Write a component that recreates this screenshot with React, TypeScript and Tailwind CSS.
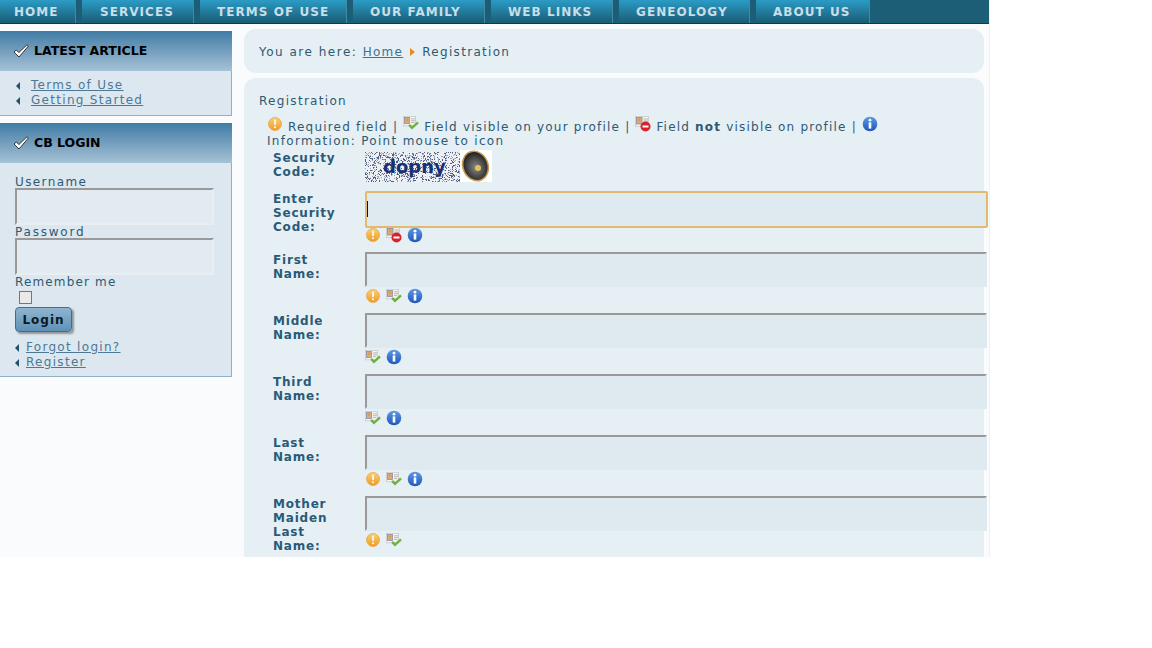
import React from 'react';

const font = "font-['DejaVu_Sans',Verdana,sans-serif]";

const navItems = [
  { label: 'HOME', width: 'w-[76px]', pad: 'pl-[14px]' },
  { label: 'SERVICES', width: 'w-[112px]', pad: 'pl-[18px]' },
  { label: 'TERMS OF USE', width: 'w-[147px]', pad: 'pl-[17px]' },
  { label: 'OUR FAMILY', width: 'w-[132px]', pad: 'pl-[17px]' },
  { label: 'WEB LINKS', width: 'w-[122px]', pad: 'pl-[17px]' },
  { label: 'GENEOLOGY', width: 'w-[131px]', pad: 'pl-[17px]' },
  { label: 'ABOUT US', width: 'w-[114px]', pad: 'pl-[17px]' },
];

const RequiredIcon = () => (
  <svg width="16" height="16" viewBox="0 0 16 16" className="shrink-0">
    <defs>
      <linearGradient id="req" x1="0" y1="0" x2="0" y2="1">
        <stop offset="0" stopColor="#f9d07a" />
        <stop offset="1" stopColor="#f09a20" />
      </linearGradient>
    </defs>
    <circle cx="8" cy="8" r="6.5" fill="url(#req)" stroke="#e8a646" strokeWidth="0.8" />
    <rect x="7.2" y="3.6" width="1.7" height="5.6" rx="0.8" fill="#fff" />
    <circle cx="8" cy="11.2" r="1" fill="#fff" />
  </svg>
);

const Card = () => (
  <g>
    <rect x="0.5" y="0.5" width="13" height="10" fill="#f4f3f0" stroke="#c4c4c4" strokeWidth="0.7" />
    <rect x="1.5" y="1.5" width="5.5" height="6.5" fill="#d3ad84" stroke="#8f86a8" strokeWidth="0.8" />
    <circle cx="4.2" cy="4" r="1.4" fill="#e7983a" />
    <path d="M8.5 3h4.5M8.5 5h4.5M8.5 7h3.5" stroke="#a5a5a5" strokeWidth="0.8" />
  </g>
);

const VisibleIcon = () => (
  <svg width="16" height="15" viewBox="0 0 17 16" className="shrink-0">
    <Card />
    <path d="M6.5 9.5l3 3.2L16 6.8" fill="none" stroke="#6fb143" strokeWidth="2.6" />
  </svg>
);

const HiddenIcon = () => (
  <svg width="16" height="16" viewBox="0 0 16 16" className="shrink-0">
    <Card />
    <circle cx="10.5" cy="10.5" r="5" fill="#d8212b" />
    <rect x="7.5" y="9.5" width="6" height="2" fill="#fff" />
  </svg>
);

const InfoIcon = () => (
  <svg width="16" height="16" viewBox="0 0 16 16" className="shrink-0">
    <defs>
      <linearGradient id="inf" x1="0" y1="0" x2="0" y2="1">
        <stop offset="0" stopColor="#5f9ae6" />
        <stop offset="1" stopColor="#1f56b8" />
      </linearGradient>
    </defs>
    <circle cx="8" cy="8" r="7.3" fill="url(#inf)" />
    <circle cx="8" cy="4.2" r="1.4" fill="#fff" />
    <rect x="6.7" y="6.4" width="2.6" height="6.2" fill="#fff" />
  </svg>
);

const CheckMark = () => (
  <svg width="16" height="14" viewBox="0 0 16 14" className="shrink-0">
    <path d="M1 8 L3.4 6 L5.8 8.6 L14 0.8 L15.4 2 L6 13 Z" fill="#fff" stroke="#222" strokeWidth="0.9" strokeLinejoin="round" />
  </svg>
);

const Bullet = () => (
  <span className="w-0 h-0 border-y-[4px] border-y-transparent border-r-[4px] border-r-[#24506a] shrink-0" />
);

const ModuleHeader = ({ title }: { title: string }) => (
  <div className="h-10 pl-[13px] pb-[1px] flex items-center gap-[5px] bg-gradient-to-b from-[#3f7ca5] to-[#a6c2d6]">
    <CheckMark />
    <span className="text-[12.5px] tracking-normal font-bold text-black">{title}</span>
  </div>
);

const LinkRow = ({ label, gap }: { label: string; gap: string }) => (
  <div className={`flex items-center h-[15px] ${gap}`}>
    <Bullet />
    <a className="underline text-[#4d7896] text-[12px] tracking-[1.3px]">{label}</a>
  </div>
);

const SideInput = () => (
  <input className="block w-[199px] h-[37px] bg-[#e2ebf1] border-2 border-t-[#999] border-l-[#999] border-r-[#e8eef2] border-b-[#e8eef2]" />
);

// noisy captcha background, fixed seed so it renders the same every time
let seed = 7;
const next = () => {
  seed = (seed * 1103515245 + 12345) % 2147483648;
  return seed / 2147483648;
};
const noise = Array.from({ length: 1100 }, () => ({
  x: Math.floor(next() * 95),
  y: Math.floor(next() * 30),
  dark: next() > 0.45,
}));

const Captcha = () => (
  <div className="flex items-start mt-[1px]">
    <div className="relative w-[95px] h-[30px] bg-[#eef0f4] overflow-hidden">
      <svg width="95" height="30" className="block">
        {noise.map((n, i) => (
          <rect key={i} x={n.x} y={n.y} width="1" height="1" fill={n.dark ? '#4f5f84' : '#98a4b8'} />
        ))}
      </svg>
      <span className="absolute left-[18px] top-[2px] font-bold text-[18px] leading-[26px] tracking-normal text-[#1b2f74]">
        dopny
      </span>
    </div>
    <div className="w-[32px] h-[32px] -mt-[2px] bg-white">
      <svg width="32" height="32" viewBox="0 0 32 32">
        <defs>
          <radialGradient id="cone" cx="0.5" cy="0.55" r="0.6">
            <stop offset="0" stopColor="#8a8a8a" />
            <stop offset="1" stopColor="#111" />
          </radialGradient>
        </defs>
        <ellipse cx="15.5" cy="16" rx="12.5" ry="15" transform="rotate(-22 15.5 16)" fill="url(#cone)" stroke="#c79c55" strokeWidth="1.6" />
        <circle cx="18" cy="18" r="3" fill="#e4c25a" />
      </svg>
    </div>
  </div>
);

type Field = {
  label: string[];
  icons: React.ReactNode[];
  focused?: boolean;
};

const fields: Field[] = [
  { label: ['Enter', 'Security', 'Code:'], icons: [<RequiredIcon key="r" />, <HiddenIcon key="h" />, <InfoIcon key="i" />], focused: true },
  { label: ['First', 'Name:'], icons: [<RequiredIcon key="r" />, <VisibleIcon key="v" />, <InfoIcon key="i" />] },
  { label: ['Middle', 'Name:'], icons: [<VisibleIcon key="v" />, <InfoIcon key="i" />] },
  { label: ['Third', 'Name:'], icons: [<VisibleIcon key="v" />, <InfoIcon key="i" />] },
  { label: ['Last', 'Name:'], icons: [<RequiredIcon key="r" />, <VisibleIcon key="v" />, <InfoIcon key="i" />] },
  { label: ['Mother', 'Maiden', 'Last', 'Name:'], icons: [<RequiredIcon key="r" />, <VisibleIcon key="v" />] },
];

const labelClass = 'w-[92px] shrink-0 text-[12px] leading-[14px] font-bold text-[#2a5a78] tracking-[0.8px]';

const FieldRow = ({ field }: { field: Field }) => (
  <div className="flex h-[61px]">
    <div className={`${labelClass} pt-[1px]`}>
      {field.label.map((line) => (
        <div key={line}>{line}</div>
      ))}
    </div>
    <div className="w-[622px] shrink-0">
      <div className="relative">
        {field.focused ? (
          <>
            <input className="block w-[623px] h-[37px] bg-[#dfeaf0] border-2 border-[#e2ba6e] rounded-[2px]" />
            <span className="absolute left-[2px] top-[10px] w-px h-[16px] bg-[#111]" />
          </>
        ) : (
          <input className="block w-full h-[35px] bg-[#dfeaf0] border-2 border-t-[#999] border-l-[#999] border-r-[#dfeaf0] border-b-[#dfeaf0]" />
        )}
      </div>
      <div className={`flex items-center gap-[5px] ${field.focused ? 'mt-[-1px]' : 'mt-[1px]'}`}>
        {field.icons}
      </div>
    </div>
  </div>
);

export default function App() {
  return (
    <div className={`${font} h-[648px] bg-white text-[#2d5a72] text-[12px] leading-[15px] tracking-[1.3px]`}>
      <div className="w-[990px] h-[557px] overflow-hidden bg-[#f9fbfd] border-r border-[#eef1f4]">
        <nav className="flex h-6 gap-[6px] bg-[#1c5e75] border-b border-[#0f3b4b]">
          {navItems.map((item) => (
            <a
              key={item.label}
              className={`${item.width} ${item.pad} h-[23px] pt-[1px] shrink-0 flex items-center bg-gradient-to-b from-[#2b9cc6] to-[#1a5c74] border-r border-[#3f8aa5] text-[12px] font-bold tracking-[1.05px] text-[#c6dfea]`}
            >
              {item.label}
            </a>
          ))}
        </nav>

        <div className="flex">
          <aside className="w-[232px] shrink-0 pt-[7px] tracking-[1.4px]">
            <section>
              <ModuleHeader title="LATEST ARTICLE" />
              <div className="h-[45px] pl-4 pt-[7px] bg-[#dde7ef] border-r border-b border-[#8fb0c6]">
                <LinkRow label="Terms of Use" gap="gap-[11px]" />
                <LinkRow label="Getting Started" gap="gap-[11px]" />
              </div>
            </section>
            <section className="mt-[7px]">
              <ModuleHeader title="CB LOGIN" />
              <div className="h-[214px] pl-[15px] pt-[12px] bg-[#dde7ef] border-r border-b border-[#8fb0c6]">
                <div className="-mb-[2px]">Username</div>
                <SideInput />
                <div className="-mb-[2px] tracking-[1.8px]">Password</div>
                <SideInput />
                <div className="tracking-[1.15px]">Remember me</div>
                <input type="checkbox" className="block w-[13px] h-[13px] ml-1 mt-[1px] appearance-none bg-[#e9e9e9] border border-[#777]" />
                <button className="block mt-[3px] w-[57px] h-[25px] pt-[1px] rounded-[4px] bg-gradient-to-b from-[#8fb5d0] to-[#5f92b6] border border-[#3f6f90] shadow-[2px_2px_2px_rgba(0,0,0,0.35)] text-[12px] font-bold tracking-[1px] text-[#0b1a24]">
                  Login
                </button>
                <div className="mt-[8px]">
                  <LinkRow label="Forgot login?" gap="gap-[7px]" />
                  <LinkRow label="Register" gap="gap-[7px]" />
                </div>
              </div>
            </section>
          </aside>

          <main className="w-[740px] ml-3 pt-[5px] shrink-0">
            <div className="h-11 pl-[15px] pt-[2px] flex items-center rounded-xl bg-[#e6eff4]">
              <span className="tracking-[1.5px]">You are here:&nbsp;</span>
              <a className="underline text-[#3c7391]">Home</a>
              <span className="ml-[7px] mr-[7px] w-0 h-0 border-y-[4px] border-y-transparent border-l-[5px] border-l-[#e88a1f]" />
              <span>Registration</span>
            </div>
            <div className="mt-[5px] h-[500px] pl-[15px] pt-[16px] rounded-xl bg-[#e6eff4]">
              <div>Registration</div>
              <div className="mt-[7px] pl-[8px] h-[34px]">
                <div className="flex items-start gap-[5px] whitespace-nowrap h-[18px] tracking-[1.2px]">
                  <RequiredIcon />
                  <span className="mt-[4px]">Required field |</span>
                  <VisibleIcon />
                  <span className="mt-[4px]">Field visible on your profile |</span>
                  <HiddenIcon />
                  <span className="mt-[4px]">
                    Field <b>not</b> visible on profile |
                  </span>
                  <InfoIcon />
                </div>
                <div>Information: Point mouse to icon</div>
              </div>
              <div className="pl-[14px] mt-[1px]">
                <div className="flex h-[40px]">
                  <div className={labelClass}>
                    <div>Security</div>
                    <div>Code:</div>
                  </div>
                  <Captcha />
                </div>
                {fields.map((field) => (
                  <FieldRow key={field.label.join(' ')} field={field} />
                ))}
              </div>
            </div>
          </main>
        </div>
      </div>
    </div>
  );
}
